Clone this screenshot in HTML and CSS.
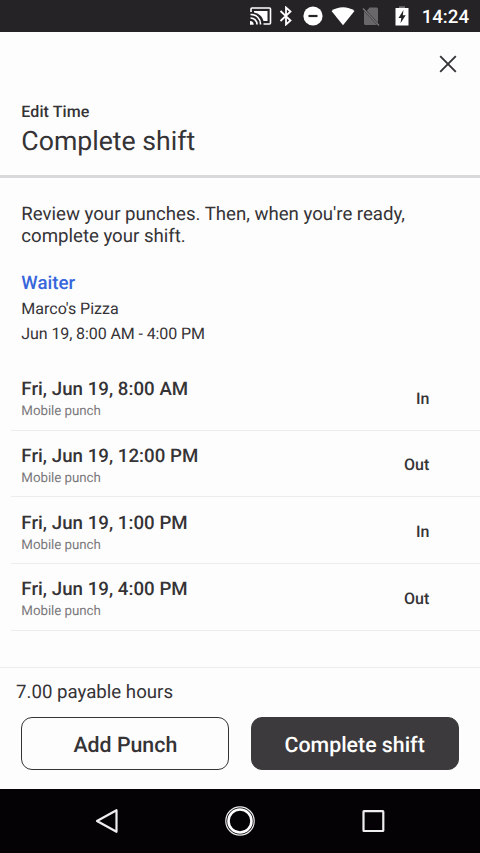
FILE: index.html
```html
<!DOCTYPE html>
<html lang="en">
<head>
  <meta charset="UTF-8">
  <meta name="viewport" content="width=device-width, initial-scale=1.0">
  <title>Complete shift</title>
  <link rel="stylesheet" href="styles.css">
</head>
<body>
  <div class="status-bar">
    <svg class="icon-cast" width="22" height="20" viewBox="0 0 22 20">
      <path d="M1 6V3Q1 2 2 2H19.500Q20.500 2 20.500 3V17Q20.500 18 19.500 18H13.500" fill="none" stroke="#fff" stroke-width="1.6"/>
      <path d="M4 5H17.500V15H13.500C12.500 10.500 9 7.500 4 6.500Z" fill="#fff"/>
      <path d="M0.500 8.500A9.500 9.500 0 0 1 10.500 18.500M0.500 12A6.300 6.300 0 0 1 7 18.500" fill="none" stroke="#fff" stroke-width="1.6"/>
      <path d="M0 15A3.500 3.500 0 0 1 3.700 18.700H0Z" fill="#fff"/>
    </svg>
    <svg class="icon-bluetooth" width="14" height="20" viewBox="0 0 14 20">
      <path d="M1.500 5L11.500 14.500L7 18.500V1.500L11.500 5.500L1.500 15" fill="none" stroke="#fff" stroke-width="1.800"/>
    </svg>
    <svg class="icon-dnd" width="20" height="20" viewBox="0 0 20 20">
      <circle cx="10" cy="10" r="9.600" fill="#fff"/>
      <path d="M5.500 10H14.500" stroke="#252326" stroke-width="2.200"/>
    </svg>
    <svg class="icon-wifi" width="24" height="20" viewBox="0 0 24 20">
      <path d="M0.500 5C7 0 17 0 23.500 5L12 19.200Z" fill="#fff"/>
    </svg>
    <svg class="icon-sim" width="18" height="20" viewBox="0 0 18 20">
      <path d="M7.500 1.500H14.500Q16 1.500 16 3V17L4.800 4.800ZM2 5L15 19H3.500Q2 19 2 17.500Z" fill="#69676a"/>
      <path d="M1 2.500L17 19.500" stroke="#78767a" stroke-width="1.300"/>
    </svg>
    <svg class="icon-battery" width="14" height="20" viewBox="0 0 14 20">
      <path d="M4 0.300H10V2H4Z" fill="#77757a"/>
      <path d="M0.500 2.500Q0.500 2 1 2H13Q13.500 2 13.500 2.500V19.500H0.500Z" fill="#fff"/>
      <path d="M8.500 4L3.500 12H6.300L5.500 17.300L10.700 9.300H7.800Z" fill="#252326"/>
    </svg>
    <span class="clock">14:24</span>
  </div>

  <header class="header">
    <button class="close-btn" aria-label="Close">
      <svg width="18" height="18" viewBox="0 0 18 18">
        <path d="M1.200 1.200L16.800 16.800M16.800 1.200L1.200 16.800" stroke="#353336" stroke-width="1.900"/>
      </svg>
    </button>
    <div class="subtitle">Edit Time</div>
    <h1>Complete shift</h1>
  </header>

  <main>
    <p class="instructions">Review your punches. Then, when you're ready, complete your shift.</p>
    <h2>Waiter</h2>
    <p class="shift-info">Marco's Pizza</p>
    <p class="shift-info shift-hours">Jun 19, 8:00 AM - 4:00 PM</p>

    <ul class="punches">
      <li>
        <div>
          <div class="punch-time">Fri, Jun 19, 8:00 AM</div>
          <div class="punch-source">Mobile punch</div>
        </div>
        <span class="punch-type">In</span>
      </li>
      <li>
        <div>
          <div class="punch-time">Fri, Jun 19, 12:00 PM</div>
          <div class="punch-source">Mobile punch</div>
        </div>
        <span class="punch-type">Out</span>
      </li>
      <li>
        <div>
          <div class="punch-time">Fri, Jun 19, 1:00 PM</div>
          <div class="punch-source">Mobile punch</div>
        </div>
        <span class="punch-type">In</span>
      </li>
      <li>
        <div>
          <div class="punch-time">Fri, Jun 19, 4:00 PM</div>
          <div class="punch-source">Mobile punch</div>
        </div>
        <span class="punch-type">Out</span>
      </li>
    </ul>
  </main>

  <footer class="footer">
    <div class="total">7.00 payable hours</div>
    <div class="actions">
      <button class="btn">Add Punch</button>
      <button class="btn btn-dark">Complete shift</button>
    </div>
  </footer>

  <nav class="nav-bar">
    <svg width="32" height="32" viewBox="0 0 32 32">
      <path d="M6 16L25.500 5.200V26.800Z" fill="none" stroke="#eee" stroke-width="2.200" stroke-linejoin="round"/>
    </svg>
    <svg width="32" height="32" viewBox="0 0 32 32">
      <circle cx="16" cy="16" r="14.200" fill="none" stroke="#eee" stroke-width="1.200"/>
      <circle cx="16" cy="16" r="11.500" fill="none" stroke="#fff" stroke-width="2.600"/>
    </svg>
    <svg width="32" height="32" viewBox="0 0 32 32">
      <rect x="6.500" y="6.200" width="19.800" height="19.800" rx="0.500" fill="none" stroke="#eee" stroke-width="2.200"/>
    </svg>
  </nav>
</body>
</html>
```
FILE: styles.css
```css
* {
  box-sizing: border-box;
}

body {
  display: flex;
  flex-direction: column;
  height: 853px;
  margin: 0;
  background-color: #fdfdfd;
  color: #353336;
  font-family: Roboto, sans-serif;
  text-rendering: geometricPrecision;
}

h1, h2, p, ul {
  margin: 0;
  padding: 0;
}

button {
  font-family: inherit;
  text-rendering: inherit;
  cursor: pointer;
}

.status-bar {
  display: flex;
  align-items: center;
  justify-content: flex-end;
  height: 32px;
  padding-right: 11px;
  background-color: #252326;
}

.icon-cast {
  margin-right: 7px;
}

.icon-bluetooth {
  margin-right: 10px;
}

.icon-dnd {
  margin-right: 8px;
}

.icon-wifi {
  margin-right: 7px;
}

.icon-sim {
  margin-right: 15px;
}

.icon-battery {
  margin-right: 13px;
}

.clock {
  padding-top: 2px;
  color: #fff;
  font-size: 18.67px;
  font-weight: 500;
  line-height: 32px;
}

.header {
  display: flex;
  flex-direction: column;
  height: 146px;
  padding: 0 22px 0 21.33px;
  border-bottom: 3px solid #d9d8da;
}

.close-btn {
  display: flex;
  align-self: flex-end;
  margin: 23px 1px 0 0;
  padding: 0;
  border: none;
  background: none;
}

.subtitle {
  margin-top: 28px;
  font-size: 16px;
  font-weight: 500;
  letter-spacing: 0.1px;
  line-height: 21px;
}

h1 {
  margin-top: 2px;
  font-size: 26.67px;
  font-weight: 400;
  line-height: 34px;
}

main {
  flex: 1;
}

.instructions {
  padding: 25px 50px 0 21.33px;
  font-size: 18.67px;
  letter-spacing: -0.02px;
  line-height: 22px;
}

h2 {
  margin: 24px 0 0 21.33px;
  color: #3766dc;
  font-size: 18.67px;
  font-weight: 500;
  line-height: 24px;
}

.shift-info {
  margin-left: 21.33px;
  padding-top: 3px;
  font-size: 16px;
  line-height: 22px;
}

.shift-hours {
  letter-spacing: -0.1px;
}

.punches {
  margin: 19px 0 0 11px;
  list-style: none;
}

.punches li {
  display: flex;
  align-items: center;
  justify-content: space-between;
  height: 66.67px;
  padding: 4px 50.67px 0 10.33px;
  border-bottom: 1px solid #ececed;
}

.punch-time {
  padding-top: 2px;
  font-size: 18.67px;
  font-weight: 500;
  letter-spacing: 0.04px;
  line-height: 24px;
}

.punch-source {
  color: #7a787b;
  font-size: 13.33px;
  letter-spacing: -0.05px;
  line-height: 21px;
}

.punch-type {
  margin-top: -1px;
  font-size: 16px;
  font-weight: 500;
}

.footer {
  height: 122px;
  padding: 13px 21.33px 0;
  border-top: 1px solid #ececed;
}

.total {
  margin-left: -5.33px;
  font-size: 18.67px;
  line-height: 22px;
}

.actions {
  display: flex;
  gap: 21.33px;
  margin-top: 14px;
}

.btn {
  flex: 1;
  height: 53.33px;
  padding: 3px 0 0;
  border: 1.33px solid #353336;
  border-radius: 11px;
  background-color: #fdfdfd;
  color: #353336;
  font-size: 21.33px;
  font-weight: 500;
}

.btn-dark {
  background-color: #3c3a3d;
  border-color: #3c3a3d;
  color: #fff;
}

.nav-bar {
  display: flex;
  align-items: center;
  justify-content: space-between;
  height: 64px;
  padding: 0 91px;
  background-color: #040205;
}
```
